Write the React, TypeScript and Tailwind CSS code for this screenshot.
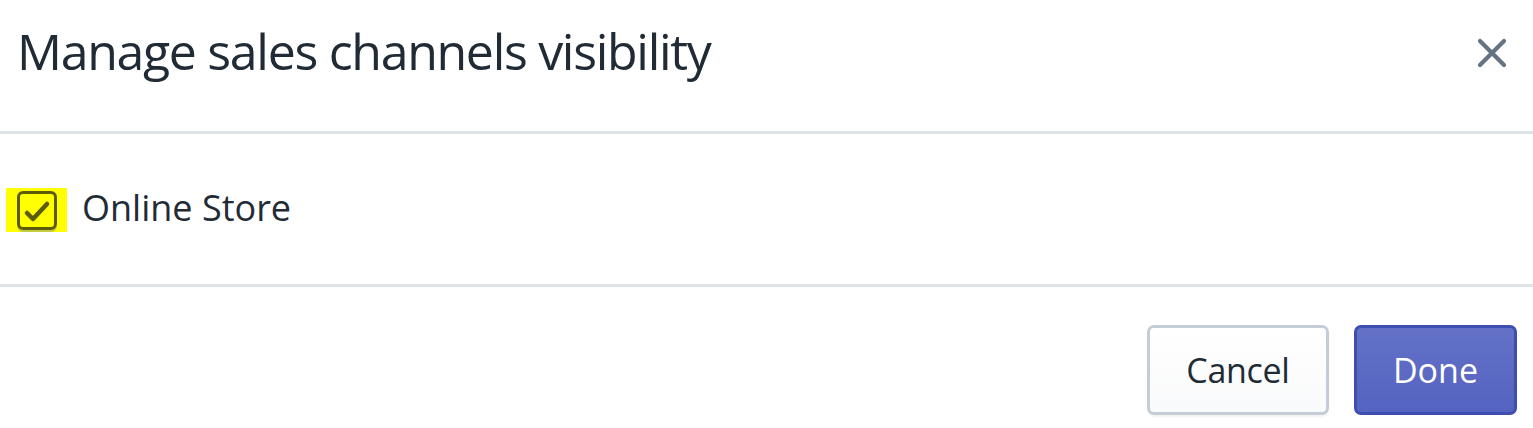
import { useState } from 'react';

const App = () => {
  const [checked, setChecked] = useState(true);

  return (
    <div className="w-[1533px] h-[428px] bg-white text-[#212b36] flex flex-col" style={{ fontFamily: '"Open Sans", "Noto Sans", sans-serif' }}>
      {/* header */}
      <div className="h-[134px] flex items-center justify-between pl-[17px] pr-[26px] border-b-[3px] border-[#dfe3e8] shrink-0">
        <h1 className="text-[50px] leading-none font-normal tracking-[-1.3px] pb-[30px]">Manage sales channels visibility</h1>
        <button className="w-[30px] h-[30px] flex items-center justify-center text-[#637381] mb-[26px]">
          <svg width="30" height="30" viewBox="0 0 30 30" fill="none">
            <path d="M3 3 L27 27 M27 3 L3 27" stroke="currentColor" strokeWidth="4.2" strokeLinecap="round" />
          </svg>
        </button>
      </div>

      {/* body */}
      <div className="h-[153px] flex items-center pl-[6px] border-b-[3px] border-[#dfe3e8] shrink-0">
        <label className="flex items-center cursor-pointer">
          <span className="w-[61px] h-[44px] bg-[#ffff00] flex items-center justify-center mt-[2px]">
            <button
              onClick={() => setChecked(!checked)}
              className="w-[40px] h-[39px] rounded-[6px] border-[3px] border-[#5c5c08] flex items-center justify-center shadow-[0_2px_0_0_rgba(92,106,196,0.35)]"
            >
              {checked && (
                <svg width="30" height="30" viewBox="0 0 30 30" fill="none">
                  <path d="M5 18 L11 24 L25 9" stroke="#5c5c08" strokeWidth="4.5" strokeLinecap="round" strokeLinejoin="round" />
                </svg>
              )}
            </button>
          </span>
          <span className="ml-[15px] text-[36px] leading-none pb-[2px]">Online Store</span>
        </label>
      </div>

      {/* footer */}
      <div className="flex-1 flex justify-end items-start pt-[38px] pr-[16px] gap-[25px]">
        <button className="w-[182px] h-[90px] rounded-[7px] border-[3px] border-[#c4cdd5] bg-gradient-to-b from-white to-[#f9fafb] text-[#212b36] text-[34px] tracking-[-0.3px] shadow-[0_2px_2px_rgba(22,29,37,0.05)]">
          Cancel
        </button>
        <button className="w-[163px] h-[90px] rounded-[7px] border-[3px] border-[#3f4eae] bg-gradient-to-b from-[#6371c7] to-[#5563c1] text-white text-[34px]">
          Done
        </button>
      </div>
    </div>
  );
};

export default App;
